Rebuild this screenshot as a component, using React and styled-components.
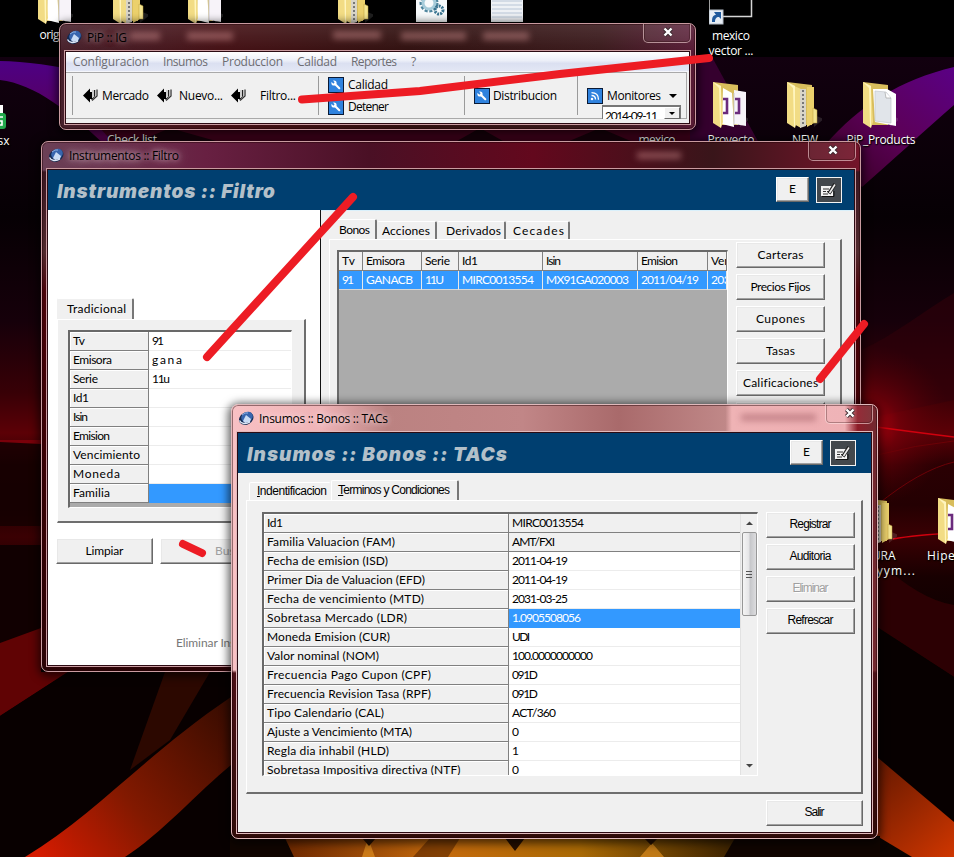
import React, { useLayoutEffect, useRef } from 'react';
import styled, { createGlobalStyle, css } from 'styled-components';

const Global = createGlobalStyle`
  *, *::before, *::after { box-sizing: border-box; }
  html, body { margin: 0; padding: 0; background: #000; overflow: hidden; }
`;

const gothic = css`font-family: Lato, "Open Sans", sans-serif; font-size: 12px;`;
const segoe = css`font-family: "Open Sans", "Noto Sans", sans-serif; font-size: 12px;`;
const sans = css`font-family: "Liberation Sans", Arial, sans-serif; font-size: 12px;`;

/* Text that is tracked so that it takes up exactly w pixels. */
const Run = styled.span`display: inline-block; white-space: pre; flex: none;`;
function Fit({ w, children }) {
  const ref = useRef(null);
  useLayoutEffect(() => {
    const el = ref.current;
    const n = el.textContent.length;
    const fit = () => {
      el.style.letterSpacing = '0px';
      el.style.marginRight = '0px';
      const s = (w - el.getBoundingClientRect().width) / Math.max(1, n - 1);
      el.style.letterSpacing = s + 'px';
      el.style.marginRight = -s + 'px';
    };
    if (w) fit();
  }, [w, children]);
  return <Run ref={ref}>{children}</Run>;
}

const Desktop = styled.main`
  position: relative; width: 954px; height: 857px; overflow: hidden; background: #050001; color: #000;
`;
const Layer = styled.svg`position: absolute; left: 0; top: 0; pointer-events: none;`;

/* ---------- desktop icons ---------- */
const IconSpot = styled.div`
  position: absolute; left: ${p => p.$x}px; top: ${p => p.$y}px; width: 76px;
  display: flex; flex-direction: column; align-items: center; gap: ${p => p.$gap ?? 4}px;
  ${segoe} line-height: 15px; color: #fff; text-shadow: 0 1px 2px #000, 1px 1px 1px #000;
`;
const IconText = styled.div`display: flex; flex-direction: column; align-items: center;`;
const FolderArt = styled.svg`display: block; margin-left: -7px;`;

function Folder({ kind }) {
  return (
    <FolderArt width="40" height="48" viewBox="0 0 40 48">
      <polygon points="32,34 42,38 32,46" fill="#fff" opacity=".12" />
      <polygon points="5,1 30,4 30,44 12,44" fill="#d8bd5c" />
      {kind === 'zip' ? (
        <g>
          <polygon points="10,4 19,8 19,47 10,42" fill="#f1dc86" />
          <polygon points="18,8 24,8 24,45 18,47" fill="#d9d5c8" />
          <path d="M21 9v36" stroke="#777" strokeWidth="2" strokeDasharray="2 2" />
          <polygon points="25,6 32,6 32,42 25,46" fill="#ebd06c" />
          <polygon points="31,27 35,29 35,42 31,42" fill="#f4e48f" stroke="#b99c3f" strokeWidth=".5" />
        </g>
      ) : kind === 'paper' ? (
        <g>
          <polygon points="15,8 29,8 38,13 38,45 17,41" fill="#fff" />
          <polygon points="17,10 28,11 33,17 33,42 17,40" fill="#e1e5ea" stroke="#c3c7cd" strokeWidth=".7" />
          <path d="M27 11l1 6h5" fill="#fff" stroke="#999" strokeWidth=".6" />
        </g>
      ) : (
        <g>
          <polygon points="15,7 24,12 26,46 14,43" fill="#fff" />
          <polygon points="26,9 38,11 38,45 26,43" fill="#f7f3f9" />
          <path d="M26 12v32" stroke="#c9c9d2" />
          {kind === 'one' && <path d="M15 18h4v14h-4M27 18h4v14h-4" fill="none" stroke="#6b2b7d" strokeWidth="2.6" />}
        </g>
      )}
      <polygon points="5,1 13,5 15,41 13,47 5,42" fill="#f2dc84" />
      <polygon points="5,1 13,5 13,47 12,45 11,7" fill="#fff5bd" />
    </FolderArt>
  );
}
function Gears() {
  return (
    <svg width="40" height="48" viewBox="0 0 40 48">
      <rect x="5" width="31" height="45" fill="#f7fafb" />
      <circle cx="18" cy="26" r="8" fill="none" stroke="#4d849c" strokeWidth="3" strokeDasharray="3 1.6" />
      <circle cx="18" cy="26" r="6" fill="none" stroke="#a6ccda" strokeWidth="3" />
      <circle cx="28" cy="33" r="4" fill="none" stroke="#3a7490" strokeWidth="3" strokeDasharray="2 1" />
    </svg>
  );
}
function Notes() {
  return (
    <svg width="40" height="48" viewBox="0 0 40 48">
      <rect x="5" width="32" height="45" fill="#eef1f5" />
      <path d="M6 24h30M6 28h30M6 32h30M6 36h30M6 40h30" stroke="#b8c5d6" />
    </svg>
  );
}
function Shortcut() {
  return (
    <svg width="44" height="48" viewBox="0 0 44 48">
      <path d="M0 0V39.5H42.5V0" fill="none" stroke="#d5d5d5" strokeWidth="1.5" />
      <rect x="0" y="33" width="14" height="14" fill="#e8eef5" stroke="#b5bdc8" />
      <path d="M3 45c0-5 1-7 4-7l-2-3h7v7l-2-2c-3 0-4 2-4 5z" fill="#215a9c" />
    </svg>
  );
}
function Sheet() {
  return (
    <svg width="40" height="26" viewBox="0 0 40 26">
      <rect width="37" height="10" fill="#fff" />
      <rect y="8" width="40" height="16" rx="3" fill="#22a84c" />
      <path d="M37 12h-5v4h4v4h-5" fill="none" stroke="#fff" strokeWidth="1.6" />
    </svg>
  );
}
function DesktopIcon({ x, y, art, lines, gap }) {
  return (
    <IconSpot $x={x} $y={y} $gap={gap}>
      {art}
      <IconText>{lines.map(([t, w]) => <Fit key={t} w={w}>{t}</Fit>)}</IconText>
    </IconSpot>
  );
}

/* ---------- windows ---------- */
const WindowBox = styled.section`
  position: absolute; left: ${p => p.$x}px; top: ${p => p.$y}px; width: ${p => p.$w}px; height: ${p => p.$h}px;
  display: flex; flex-direction: column; padding: 0 5px 5px 5px;
  border: 1px solid ${p => p.$edge}; border-radius: 7px; overflow: hidden;
  background: ${p => p.$glass};
  box-shadow: inset 0 0 0 1px rgba(30, 0, 5, .45);
`;
const Shade = styled.div`
  position: absolute; left: ${p => p.$x}px; top: ${p => p.$y}px; width: ${p => p.$w}px; height: ${p => p.$h}px;
  border-radius: 8px; box-shadow: 0 2px 9px 3px rgba(0, 0, 0, .6);
`;
const TitleBar = styled.header`
  flex: none; height: ${p => p.$h}px; display: flex; align-items: flex-start; justify-content: space-between;
  position: relative;
`;
const TitleGroup = styled.div`
  display: flex; align-items: center; gap: 5px; padding: 4px 8px 0 1px; height: 22px; ${segoe}
  text-shadow: 0 0 5px rgba(255, 235, 240, ${p => p.$glow}), 0 0 8px rgba(255, 235, 240, ${p => p.$glow}), 0 0 14px rgba(255, 235, 240, ${p => p.$glow});
`;
const Close = styled.button`
  width: 48px; height: 20px; margin: -1px -1px 0 0; padding: 0 0 1px 1px; display: grid; place-items: center;
  background: rgba(255, 255, 255, .07); border: 1px solid rgba(255, 225, 225, .55); border-top: 0;
  border-radius: 0 0 5px 5px; box-shadow: inset 0 0 0 1px rgba(30, 0, 0, .3);
`;
const Smudge = styled.i`
  position: absolute; left: ${p => p.$x}px; top: ${p => p.$y}px; width: ${p => p.$w}px; height: ${p => p.$h ?? 8}px;
  background: ${p => p.$c ?? 'rgba(220,150,150,.45)'}; filter: blur(3px);
`;
const Client = styled.div`
  flex: 1; min-height: 0; display: flex; flex-direction: column; overflow: hidden;
  border: 1px solid #2b0a12; outline: 1px solid ${p => p.$edge}; background: #f0f0f0;
`;
const Orb = () => (
  <svg width="16" height="16" viewBox="0 0 16 16">
    <ellipse cx="8" cy="8.5" rx="7.6" ry="6" transform="rotate(-30 8 8)" fill="#15294f" />
    <ellipse cx="9" cy="7" rx="6" ry="5" transform="rotate(-30 9 7)" fill="#3765ae" />
    <path d="M5 11L8 5l5 4-1 3-5 1z" fill="#c9dcf5" />
    <path d="M1.5 10.5C3 14 8 14.5 12 12" stroke="#dfe9f7" strokeWidth="1.3" fill="none" />
    <path d="M4 5q3-3 6-2" stroke="#91b3e3" fill="none" />
  </svg>
);
function Frame({ x, y, w, h, glass, edge = '#c99ba0', title, tw, glow = 0.6, bar = 27, smudges, children }) {
  return (
    <>
      <Shade $x={x} $y={y} $w={w} $h={h} />
      <WindowBox $x={x} $y={y} $w={w} $h={h} $glass={glass} $edge={edge}>
        <TitleBar $h={bar}>
          {smudges}
          <TitleGroup $glow={glow}><Orb /><Fit w={tw}>{title}</Fit></TitleGroup>
          <Close>
            <svg width="12" height="10" viewBox="0 0 12 10">
              <path d="M2.5 1.5L9.5 8.5M9.5 1.5L2.5 8.5" stroke="#3a2a30" strokeWidth="4.2" />
              <path d="M2.5 1.5L9.5 8.5M9.5 1.5L2.5 8.5" stroke="#fff" strokeWidth="2.4" />
            </svg>
          </Close>
        </TitleBar>
        <Client $edge={edge}>{children}</Client>
      </WindowBox>
    </>
  );
}

const Banner = styled.div`
  flex: none; height: 40px; padding: 0 ${p => p.$end}px 0 9px; display: flex; align-items: center; justify-content: space-between;
  background: #003f70; color: #b3c0c9;
`;
const BannerTitle = styled.h1`
  margin: 4px 0 0; font: italic 900 19px/24px Inter, "Liberation Sans", sans-serif;
`;
const BannerTools = styled.div`display: flex; gap: 7px; align-items: flex-start; height: 26px;`;
const Bevel = styled.button`
  flex: none; width: ${p => p.$w ?? 89}px; height: ${p => p.$h ?? 26}px; padding: 0 0 2px;
  display: flex; align-items: center; justify-content: ${p => (p.$start ? 'flex-start' : 'center')};
  ${p => (p.$start ? css`padding-left: ${p.$start}px;` : '')}
  background: #f0f0f0; border: 1px solid; border-color: #fff #696969 #696969 #fff;
  box-shadow: inset -1px -1px 0 #a0a0a0, inset 1px 1px 0 #e8e8e8;
  color: ${p => (p.$off ? '#a0a0a0' : '#000')}; ${p => (p.$plain ? sans : gothic)}
  ${p => (p.$off && p.$plain ? 'text-shadow: 1px 1px 0 #fff;' : '')}
`;
const EditKey = styled.button`
  width: 26px; height: 26px; padding: 0; display: grid; place-items: center; background: #43484d; border: 1px solid #f4f4f4;
`;
function Heading({ w, end = 12, children }) {
  return (
    <Banner $end={end}>
      <BannerTitle><Fit w={w}>{children}</Fit></BannerTitle>
      <BannerTools>
        <Bevel $w={33} $h={25}><Fit w={6}>E</Fit></Bevel>
        <EditKey>
          <svg width="18" height="16" viewBox="0 0 18 16">
            <rect x="1" y="4" width="12" height="10" fill="#f4f4f4" />
            <path d="M3 7h6M3 9.5h3M7 9.5h2M3 12h5" stroke="#333" />
            <path d="M9 11.500L15 2" stroke="#222" strokeWidth="3.6" />
            <path d="M9.500 11L15 2.500" stroke="#eee" strokeWidth="1.6" />
            <path d="M2 14.500h12V9" stroke="#111" fill="none" />
          </svg>
        </EditKey>
      </BannerTools>
    </Banner>
  );
}

/* ---------- toolbar window ---------- */
const MenuBar = styled.nav`
  flex: none; height: 20px; display: flex; align-items: center; padding-left: 7px;
  background: linear-gradient(#fff, #eceff8 45%, #dbe0f1 60%, #e3e7f5); color: #6d6d72; ${segoe} border-bottom: 1px solid #f5f6fb;
`;
const MenuItem = styled.span`width: ${p => p.$w}px; display: flex;`;
const ToolBar = styled.div`
  flex: none; height: 47px; margin-right: 2px; padding-left: 1px; display: flex; background: #f0f0f0; border: solid #a9a9a9; border-width: 1px 1px 1px 0; ${segoe}
`;
const Group = styled.div`
  width: ${p => p.$w}px; margin: 3px 0 3px; padding-left: ${p => p.$pad}px; display: flex; gap: ${p => p.$gap ?? 0}px;
  align-items: center; position: relative; border-right: 1px solid ${p => (p.$last ? 'transparent' : '#9a9a9a')};
`;
const Tool = styled.div`width: ${p => p.$w ?? 'auto'}; display: flex; align-items: center; gap: ${p => p.$gap ?? 4}px; height: 16px;`;
const Stack = styled.div`display: flex; flex-direction: column; gap: 6px;`;
const Combo = styled.div`
  position: absolute; left: 24px; top: 29px; width: 79px; height: 14px; overflow: hidden; display: flex; justify-content: space-between;
  background: #fff; border: 2px solid #777; border-width: 2px 1px 0 1px; padding-left: 2px; ${gothic} line-height: 17px;
`;
const Drop = styled.span`
  width: 16px; height: 12px; display: grid; place-items: center; background: #f0f0f0; border: 1px solid; border-color: #fff #696969 #696969 #fff;
`;
const Down = ({ c = '#000', w = 8 }) => <svg width={w} height={w / 2} viewBox="0 0 8 4"><path d="M0 0h8L4 4z" fill={c} /></svg>;
const Back = () => (
  <svg width="16" height="16" viewBox="0 0 16 16">
    <path d="M0 7.500L7 .5V4H9V11H7V14.500Z" fill="#000" />
    <path d="M8.500 11.500L11.500 8.500V2" stroke="#222" strokeWidth="1" fill="none" />
    <path d="M9 12.500L14 8V1.500" stroke="#333" strokeWidth="1.300" fill="none" />
    <path d="M10 2v8M12.800 2v6" stroke="#9a9a9a" strokeWidth=".8" />
  </svg>
);
const BlueKey = ({ feed }) => (
  <svg width="16" height="16" viewBox="0 0 16 16">
    <rect x=".5" y=".5" width="15" height="15" fill="#2f82de" stroke="#0a1a35" />
    {feed ? (
      <g fill="none" stroke="#fff" strokeWidth="1.3">
        <path d="M4.500 7.500q4 0 4 4M4.500 4.700q7 0 7 7" /><circle cx="5" cy="11" r=".6" />
      </g>
    ) : (
      <g>
        <path d="M7 7l4.300 4.300" stroke="#fff" strokeWidth="2" strokeLinecap="round" />
        <circle cx="6" cy="6" r="2.600" fill="#fff" />
        <path d="M3 3l3 3" stroke="#2f82de" strokeWidth="1.800" />
      </g>
    )}
  </svg>
);

/* ---------- tabs and grids ---------- */
const TabRow = styled.div`
  display: flex; align-items: flex-end; height: ${p => p.$h}px; padding-left: ${p => p.$indent ?? 0}px; ${p => (p.$plain ? sans : gothic)}
`;
const Tab = styled.div`
  width: ${p => p.$w}px; height: ${p => p.$h ?? 18}px; padding-left: ${p => p.$pad ?? 6}px; padding-bottom: 1px; display: flex; align-items: center;
  border-right: 2px solid ${p => (p.$open ? 'transparent' : '#777')}; border-top: 1px solid #fff; border-left: 1px solid ${p => (p.$lit ? '#fff' : 'transparent')};
  background: #f0f0f0; border-radius: 2px 2px 0 0; position: relative;
`;
const Page = styled.div`
  width: ${p => p.$w}px; height: ${p => p.$h}px; padding: ${p => p.$pad}; display: flex; gap: 8px; align-items: flex-start;
  background: #f0f0f0; border: solid; border-width: 1px 2px 2px 1px; border-color: #fff #6e6e6e #6e6e6e #fff;
`;
const Sheetbox = styled.div`
  width: ${p => p.$w}px; height: ${p => p.$h}px; margin-top: ${p => p.$drop ?? 0}px; display: flex; overflow: hidden; background: #ababab;
  border: solid; border-width: 2px 1px 1px 2px; border-color: #696969 #fff #fff #696969; ${gothic}
`;
const Rows = styled.div`flex: 1; min-width: 0; display: flex; flex-direction: column;`;
const Row = styled.div`flex: none; display: flex; height: 19px;`;
const NameCell = styled.div`
  width: ${p => p.$w}px; height: 19px; padding: 0 0 1px 3px; display: flex; align-items: center; background: #f0f0f0;
  border-right: 1px solid #808080; border-bottom: 1px solid #808080; box-shadow: inset 1px 1px 0 #fff;
`;
const ValueCell = styled.div`
  flex: 1; height: 19px; padding: 0 0 1px 3px; display: flex; align-items: center;
  background: ${p => (p.$sel ? '#3399ff' : p.$gray ? '#f0f0f0' : '#fff')}; color: ${p => (p.$sel ? '#fff' : '#000')};
  border-bottom: 1px solid ${p => (p.$sel ? '#3399ff' : p.$gray ? '#808080' : '#ececec')};
`;
const HeadCell = styled.div`
  flex: none; width: ${p => p.$w}px; height: 19px; padding: 0 0 1px 3px; display: flex; align-items: center; overflow: hidden;
  background: ${p => (p.$sel ? '#3399ff' : '#f0f0f0')}; color: ${p => (p.$sel ? '#fff' : '#000')};
  border-right: 1px solid ${p => (p.$sel ? '#e8e8e8' : '#808080')}; border-bottom: 1px solid ${p => (p.$sel ? '#d6d6d6' : '#808080')};
`;
const Keys = styled.div`display: flex; flex-direction: column; gap: 6px;`;

/* ---------- filter window ---------- */
const Split = styled.div`flex: 1; display: flex; min-height: 0;`;
const LeftPane = styled.div`
  flex: none; width: 273px; padding: 88px 0 0 9px; background: #fff; border-right: 1px solid #111; display: flex; flex-direction: column;
`;
const RightPane = styled.div`flex: 1; padding: 8px 0 0 8px; border-top: 1px solid #d9f0fb;`;
const PairKeys = styled.div`display: flex; gap: 7px; margin: 15px 0 0 -1px;`;
const Faint = styled.div`margin: 71px 0 0 119px; color: #777; ${gothic}`;

/* ---------- terms window ---------- */
const Body = styled.div`flex: 1; padding: 7px 8px 0 8px; display: flex; flex-direction: column;`;
const Footer = styled.div`display: flex; justify-content: flex-end; padding-top: 6px;`;
const Scroll = styled.div`
  width: 17px; background: #f0f0f0; display: flex; flex-direction: column; align-items: center; border-left: 1px solid #e2e2e2;
`;
const Arrow = styled.div`height: 18px; display: grid; place-items: center; transform: ${p => (p.$up ? 'rotate(180deg)' : 'none')};`;
const Thumb = styled.div`
  width: 15px; height: 84px; border: 1px solid #979797; border-radius: 2px; display: grid; place-items: center;
  background: linear-gradient(90deg, #f5f5f5, #e5e5e7 45%, #c6c7ca 55%, #dcdcde);
`;
const Gap = styled.div`flex: 1;`;

const FILTER = [['Tv', 12, '91', 12], ['Emisora', 39, 'gana', 30], ['Serie', 25, '11u', 18], ['Id1', 16], ['Isin', 15],
  ['Emision', 37], ['Vencimiento', 67], ['Moneda', 47], ['Familia', 37]];
const COLS = [['Tv', 13, '91', 12, 24], ['Emisora', 39, 'GANACB', 47, 59], ['Serie', 25, '11U', 19, 37], ['Id1', 16, 'MIRC0013554', 72, 84],
  ['Isin', 15, 'MX91GA020003', 83, 95], ['Emision', 37, '2011/04/19', 58, 70], ['Ven', 20, '2031', 26, 19]];
const TERMS = [['Id1', 16, 'MIRC0013554', 72], ['Familia Valuacion (FAM)', 128, 'AMT/FXI', 43], ['Fecha de emision (ISD)', 121, '2011-04-19', 56],
  ['Primer Dia de Valuacion (EFD)', 158, '2011-04-19', 56], ['Fecha de vencimiento (MTD)', 157, '2031-03-25', 56],
  ['Sobretasa Mercado (LDR)', 140, '1.0905508056', 69], ['Moneda Emision (CUR)', 123, 'UDI', 18], ['Valor nominal (NOM)', 112, '100.0000000000', 81],
  ['Frecuencia Pago Cupon (CPF)', 164, '091D', 26], ['Frecuencia Revision Tasa (RPF)', 164, '091D', 26], ['Tipo Calendario (CAL)', 117, 'ACT/360', 44],
  ['Ajuste a Vencimiento (MTA)', 145, '0', 6], ['Regla dia inhabil (HLD)', 122, '1', 5], ['Sobretasa Impositiva directiva (NTF)', 194, '0', 6]];

function Wallpaper() {
  return (
    <Layer width="954" height="857" viewBox="0 0 954 857">
      <defs>
        <linearGradient id="base" x1="0" y1="57" x2="0" y2="857" gradientUnits="userSpaceOnUse">
          <stop offset="0" stopColor="#12000f" /><stop offset=".2" stopColor="#060004" /><stop offset=".33" stopColor="#16000a" /><stop offset=".42" stopColor="#380006" />
          <stop offset=".47" stopColor="#5c0006" /><stop offset=".51" stopColor="#2a0003" /><stop offset=".56" stopColor="#240002" />
          <stop offset=".6" stopColor="#3a0003" /><stop offset=".65" stopColor="#180001" /><stop offset=".75" stopColor="#080000" /><stop offset="1" stopColor="#090300" />
        </linearGradient>
        <linearGradient id="violet" x1="0" y1="60" x2="0" y2="190" gradientUnits="userSpaceOnUse">
          <stop offset="0" stopColor="#4d0085" /><stop offset=".5" stopColor="#590058" /><stop offset="1" stopColor="#650034" />
        </linearGradient>
        <linearGradient id="magenta" x1="954" y1="60" x2="850" y2="190" gradientUnits="userSpaceOnUse">
          <stop offset="0" stopColor="#5a0088" /><stop offset=".55" stopColor="#5c0058" /><stop offset="1" stopColor="#3a0026" />
        </linearGradient>
        <radialGradient id="glow" cx="872" cy="425" r="80" gradientUnits="userSpaceOnUse">
          <stop offset="0" stopColor="#c00010" stopOpacity=".9" /><stop offset=".35" stopColor="#78000a" stopOpacity=".7" /><stop offset="1" stopColor="#500006" stopOpacity="0" />
        </radialGradient>
        <linearGradient id="ember" x1="40" y1="857" x2="240" y2="690" gradientUnits="userSpaceOnUse">
          <stop offset="0" stopColor="#d51b00" /><stop offset=".4" stopColor="#821900" /><stop offset="1" stopColor="#2e0a00" />
        </linearGradient>
        <linearGradient id="ember2" x1="877" y1="770" x2="954" y2="857" gradientUnits="userSpaceOnUse">
          <stop offset="0" stopColor="#6b1a00" /><stop offset="1" stopColor="#cf3600" />
        </linearGradient>
        <linearGradient id="gold" x1="280" y1="0" x2="740" y2="0" gradientUnits="userSpaceOnUse">
          <stop offset="0" stopColor="#6b2600" /><stop offset=".35" stopColor="#c56a0c" /><stop offset=".65" stopColor="#aa6a05" /><stop offset="1" stopColor="#382000" />
        </linearGradient>
      </defs>
      <rect y="57" width="954" height="800" fill="url(#base)" />
      <rect width="954" height="57" fill="#000" />
      <path d="M0 61C50 62 120 76 200 110L330 145H105C70 112 35 84 0 80Z" fill="url(#violet)" />
      <path d="M100 128H690L700 145H115Z" fill="#45001d" />
      <path d="M170 128l60 17H130zM480 128l30 17h-60zM600 128l40 17H560z" fill="#19000c" />
      <path d="M690 57h22L760 145H690Z" fill="#35002e" />
      <path d="M954 67C900 80 860 105 825 145L862 187C890 163 925 130 954 105Z" fill="url(#magenta)" />
      <path d="M954 293C925 310 895 335 861 350V420L954 400Z" fill="#30000a" opacity=".6" />
      <rect x="790" y="345" width="164" height="170" fill="url(#glow)" />
      <path d="M862 425Q905 431 954 437M893 539Q915 535 954 533" stroke="#d0000e" strokeWidth="1.6" fill="none" />
      <path d="M877 455Q915 445 954 441M877 505Q920 470 954 462" stroke="#6c0007" fill="none" />
      <path d="M877 560Q920 600 954 605V677L877 627Z" fill="#2c0003" />
      <path d="M877 627L954 677V857L877 760Z" fill="#070000" />
      <path d="M877 757L954 822V857H912L877 836Z" fill="url(#ember2)" />
      <path d="M0 440H41V526H0Z" fill="#120002" opacity=".75" />
      <path d="M0 440H41V444L0 442Z" fill="#7a000a" />
      <path d="M0 545H41V630L0 646Z" fill="#110001" />
      <path d="M0 643L41 628V672H68L0 716Z" fill="#600304" />
      <path d="M0 716L68 672H231V857H0Z" fill="#080000" />
      <path d="M165 672H210L170 740L130 770Z" fill="#2c0800" />
      <path d="M25 857C95 815 145 755 231 697V765C200 790 160 835 125 857Z" fill="url(#ember)" />
      <rect x="230" y="836" width="650" height="21" fill="#100500" />
      <path d="M285 838H735L724 857H294Z" fill="url(#gold)" />
      <path d="M368 838L362 857H375ZM652 843L664 857H640Z" fill="#df8f20" opacity=".7" />
      <path d="M362 838h14l-7 8zM505 838h20l-10 13zM644 838h14l-7 7z" fill="#281000" />
      <path d="M430 838h30l-12 19h-35z" fill="#572500" opacity=".6" />
    </Layer>
  );
}

const GLASS1 = 'linear-gradient(rgba(255,255,255,.1), rgba(255,255,255,0) 28px), linear-gradient(90deg, #47202b, #441014 25%, #30100f 55%, #3a1a1c 85%, #571b35)';
const GLASS2 = 'linear-gradient(#0000 0 28px, #3a1520 30px, #50292d 110px, #4a0209 150px, #3b0004 300px, #2b0205), linear-gradient(90deg, #6b4056, #682042 20%, #4a1025 40%, #63081d 60%, #39151a 82%, #74152a)';
const GLASS3 = 'linear-gradient(#0000 0 265px, #4c1016 268px, #300c09), linear-gradient(90deg, #f8c1c4 0, #efb3b6 14%, #bb8281 24%, #c18687 45%, #a96a6b 60%, #c08888 76.500%, #efb3b5 77.500%, #eeaeb2 95%, #8d1c28 97%, #702a30)';

export default function App() {
  return (
    <Desktop>
      <Global />
      <Wallpaper />
      <DesktopIcon x={18} y={-23} art={<Folder />} gap={2} lines={[['origen', 33]]} />
      <DesktopIcon x={93} y={-23} art={<Folder kind="zip" />} lines={[]} />
      <DesktopIcon x={168} y={-23} art={<Folder />} lines={[]} />
      <DesktopIcon x={318} y={-23} art={<Folder kind="zip" />} lines={[]} />
      <DesktopIcon x={393} y={-23} art={<Gears />} lines={[]} />
      <DesktopIcon x={468} y={-23} art={<Notes />} lines={[]} />
      <DesktopIcon x={693} y={-23} art={<Shortcut />} gap={3} lines={[['mexico', 38], ['vector ...', 45]]} />
      <DesktopIcon x={-52} y={105} art={<Sheet />} gap={2} lines={[['lista.xlsx', 47]]} />
      <DesktopIcon x={94} y={132} lines={[['Check list', 50]]} />
      <DesktopIcon x={619} y={132} lines={[['mexico', 37]]} />
      <DesktopIcon x={693} y={81} art={<Folder kind="one" />} gap={3} lines={[['Proyecto', 47]]} />
      <DesktopIcon x={767} y={81} art={<Folder kind="zip" />} gap={3} lines={[['NEW', 26]]} />
      <DesktopIcon x={843} y={81} art={<Folder kind="paper" />} gap={3} lines={[['PiP_Products', 69]]} />
      <DesktopIcon x={842} y={497} art={<Folder kind="zip" />} gap={3} lines={[['CURA', 31], ['mmyyym...', 70]]} />
      <DesktopIcon x={918} y={497} art={<Folder kind="one" />} gap={3} lines={[['Hipervinc', 58]]} />

      <Frame x={59} y={23} w={637} h={107} glass={GLASS1} title="PiP :: IG" tw={40} glow={0.35}
        smudges={<><Smudge $x={65} $y={8} $w={30} /><Smudge $x={122} $y={8} $w={46} /><Smudge $x={268} $y={7} $w={48} /><Smudge $x={336} $y={8} $w={65} /><Smudge $x={418} $y={8} $w={46} /></>}>
        <MenuBar>
          <MenuItem $w={90}><Fit w={76}>Configuracion</Fit></MenuItem>
          <MenuItem $w={59}><Fit w={45}>Insumos</Fit></MenuItem>
          <MenuItem $w={75}><Fit w={61}>Produccion</Fit></MenuItem>
          <MenuItem $w={54}><Fit w={40}>Calidad</Fit></MenuItem>
          <MenuItem $w={60}><Fit w={46}>Reportes</Fit></MenuItem>
          <MenuItem $w={20}>?</MenuItem>
        </MenuBar>
        <ToolBar>
          <Group $w={6} $pad={0} />
          <Group $w={246} $pad={10}>
            <Tool $w="74px" $gap={3}><Back /><Fit w={47}>Mercado</Fit></Tool>
            <Tool $w="74px" $gap={6}><Back /><Fit w={44}>Nuevo...</Fit></Tool>
            <Tool $gap={13}><Back /><Fit w={36}>Filtro...</Fit></Tool>
          </Group>
          <Group $w={146} $pad={9}>
            <Stack>
              <Tool><BlueKey /><Fit w={40}>Calidad</Fit></Tool>
              <Tool><BlueKey /><Fit w={41}>Detener</Fit></Tool>
            </Stack>
          </Group>
          <Group $w={113} $pad={9}><Tool $gap={3}><BlueKey /><Fit w={64}>Distribucion</Fit></Tool></Group>
          <Group $w={106} $pad={9} $last>
            <Tool><BlueKey feed /><Fit w={54}>Monitores</Fit><Gap /><Down /></Tool>
            <Combo><Fit w={53}>2014-09-11</Fit><Drop><Down w={6} /></Drop></Combo>
          </Group>
        </ToolBar>
      </Frame>

      <Frame x={41} y={141} w={820} h={531} glass={GLASS2} title="Instrumentos :: Filtro" tw={110}
        smudges={<Smudge $x={590} $y={10} $w={44} $h={7} />}>
        <Heading w={218}>Instrumentos :: Filtro</Heading>
        <Split>
          <LeftPane>
            <TabRow $h={21}><Tab $w={77} $h={21} $pad={9}><Fit w={59}>Tradicional</Fit></Tab></TabRow>
            <Page $w={249} $h={204} $pad="10px 0 0 10px">
              <Sheetbox $w={224} $h={178}>
                <Rows>
                  {FILTER.map(([n, nw, v, vw], i) => (
                    <Row key={n}><NameCell $w={79}><Fit w={nw}>{n}</Fit></NameCell><ValueCell $sel={i === 8}>{v && <Fit w={vw}>{v}</Fit>}</ValueCell></Row>
                  ))}
                </Rows>
              </Sheetbox>
            </Page>
            <PairKeys>
              <Bevel $w={97}><Fit w={38}>Limpiar</Fit></Bevel>
              <Bevel $w={97} $off $start={54}><Fit w={36}>Buscar</Fit></Bevel>
            </PairKeys>
            <Faint><Fit w={108}>Eliminar Instrumento</Fit></Faint>
          </LeftPane>
          <RightPane>
            <TabRow $h={20}>
              <Tab $w={48} $h={20} $pad={9}><Fit w={31}>Bonos</Fit></Tab>
              <Tab $w={60} $pad={4}><Fit w={48}>Acciones</Fit></Tab>
              <Tab $w={69} $pad={8}><Fit w={55}>Derivados</Fit></Tab>
              <Tab $w={64} $pad={6}><Fit w={51}>Cecades</Fit></Tab>
            </TabRow>
            <Page $w={513} $h={420} $pad="2px 0 0 7px">
              <Sheetbox $drop={8} $w={391} $h={300}>
                <Rows>
                  <Row>{COLS.map(([n, nw, , , cw]) => <HeadCell key={n} $w={cw}><Fit w={nw}>{n}</Fit></HeadCell>)}</Row>
                  <Row>{COLS.map(([n, , v, vw, cw]) => <HeadCell key={n} $w={cw} $sel><Fit w={vw}>{v}</Fit></HeadCell>)}</Row>
                </Rows>
              </Sheetbox>
              <Keys>
                {[['Carteras', 46], ['Precios Fijos', 60], ['Cupones', 49], ['Tasas', 29], ['Calificaciones', 75], ['', 0]].map(([t, w]) => (
                  <Bevel key={t}><Fit w={w}>{t}</Fit></Bevel>
                ))}
              </Keys>
            </Page>
          </RightPane>
        </Split>
      </Frame>

      <Frame x={231} y={404} w={647} h={435} glass={GLASS3} edge="#e0b9bb" title="Insumos :: Bonos :: TACs" tw={129}
        smudges={<Smudge $x={504} $y={9} $w={75} $h={7} $c="rgba(120,50,60,.35)" />}>
        <Heading w={260} end={15}>Insumos :: Bonos :: TACs</Heading>
        <Body>
          <TabRow $h={20} $plain $indent={3}>
            <Tab $w={82} $pad={7} $open $lit><Fit w={70}><u>I</u>ndentificacion</Fit></Tab>
            <Tab $w={128} $h={20} $pad={6} $lit><Fit w={112}><u>T</u>erminos y Condiciones</Fit></Tab>
          </TabRow>
          <Page $w={617} $h={294} $pad="11px 0 0 15px">
            <Sheetbox $w={496} $h={264}>
              <Rows>
                {TERMS.map(([n, nw, v, vw], i) => (
                  <Row key={n}><NameCell $w={245}><Fit w={nw}>{n}</Fit></NameCell><ValueCell $sel={i === 5} $gray={i < 2}><Fit w={vw}>{v}</Fit></ValueCell></Row>
                ))}
              </Rows>
              <Scroll>
                <Arrow $up><Down w={7} c="#444" /></Arrow>
                <Thumb><svg width="8" height="9" viewBox="0 0 8 9"><path d="M1 1.500h6M1 4.500h6M1 7.500h6" stroke="#555" /></svg></Thumb>
                <Gap />
                <Arrow><Down w={7} c="#444" /></Arrow>
              </Scroll>
            </Sheetbox>
            <Keys>
              <Bevel $plain><Fit w={42}>Registrar</Fit></Bevel>
              <Bevel $plain><Fit w={42}>Auditoria</Fit></Bevel>
              <Bevel $plain $off><Fit w={36}>Eliminar</Fit></Bevel>
              <Bevel $plain><Fit w={46}>Refrescar</Fit></Bevel>
            </Keys>
          </Page>
          <Footer><Bevel $plain $w={97}><Fit w={20}>Salir</Fit></Bevel></Footer>
        </Body>
      </Frame>

      <Layer width="954" height="857" viewBox="0 0 954 857">
        <g stroke="#ed1c24" strokeWidth="8" strokeLinecap="round" fill="none">
          <path d="M302 99.500L420 91L560 74L709 58" />
          <path d="M207 357L353 197" />
          <path d="M820 379L864 324" />
          <path d="M183 544L202 553" />
        </g>
      </Layer>
    </Desktop>
  );
}
